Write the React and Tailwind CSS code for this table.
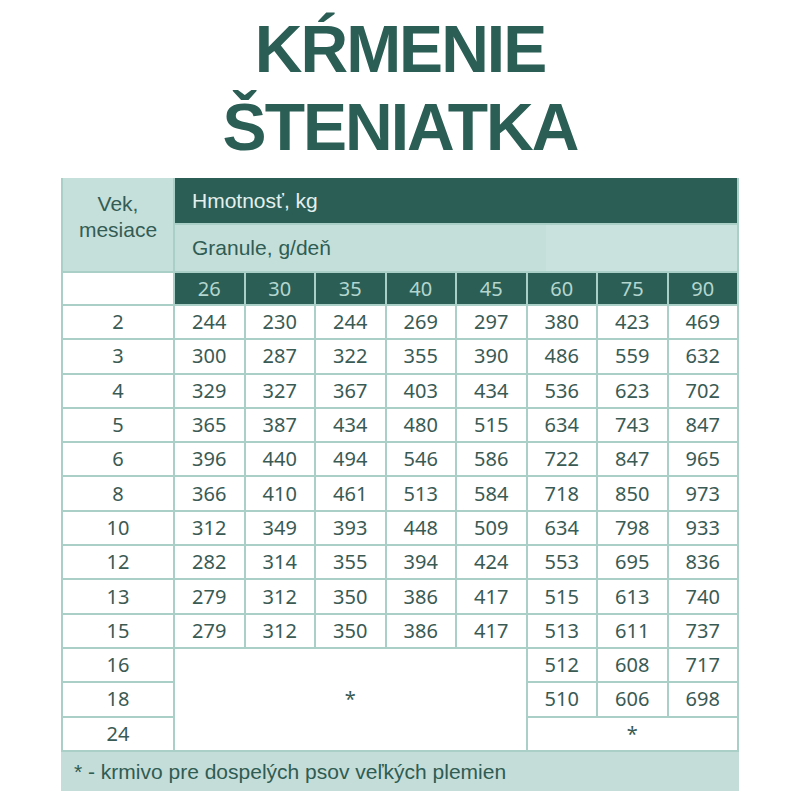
import React from "react";

const weights = [26, 30, 35, 40, 45, 60, 75, 90];

const rows = [
  ["2", [244, 230, 244, 269, 297, 380, 423, 469]],
  ["3", [300, 287, 322, 355, 390, 486, 559, 632]],
  ["4", [329, 327, 367, 403, 434, 536, 623, 702]],
  ["5", [365, 387, 434, 480, 515, 634, 743, 847]],
  ["6", [396, 440, 494, 546, 586, 722, 847, 965]],
  ["8", [366, 410, 461, 513, 584, 718, 850, 973]],
  ["10", [312, 349, 393, 448, 509, 634, 798, 933]],
  ["12", [282, 314, 355, 394, 424, 553, 695, 836]],
  ["13", [279, 312, 350, 386, 417, 515, 613, 740]],
  ["15", [279, 312, 350, 386, 417, 513, 611, 737]],
];

// last rows: only the big breeds still on puppy food
const tail = [
  ["16", [512, 608, 717]],
  ["18", [510, 606, 698]],
];

const cell =
  "bg-white flex items-center justify-center text-[20px] text-[#3a5a54] font-['Noto_Sans',sans-serif]";
const arial = "font-['Liberation_Sans',Arial,sans-serif]";

const App = () => {
  return (
    <div className="w-[800px] h-[800px] bg-white overflow-hidden">
      <h1
        className={`pt-[10px] text-center text-[66px] leading-[78px] font-bold tracking-[-2px] text-[#2b5e55] ${arial}`}
      >
        KŔMENIE
        <br />
        ŠTENIATKA
      </h1>

      <div className="ml-[61px] mt-[12px] w-[678px]">
        <div className="grid grid-cols-[110px_repeat(8,minmax(0,1fr))] grid-rows-[45px_46px_31px_repeat(13,32.3px)] gap-[2px] px-[2px] pb-[2px] bg-[#a9cfc7]">
          <div
            className={`row-span-2 bg-[#c5e0da] pt-[13px] text-center text-[21px] leading-[26px] text-[#345c54] ${arial}`}
          >
            Vek,
            <br />
            mesiace
          </div>
          <div
            className={`col-span-8 bg-[#2b5e55] flex items-center pl-[17px] text-[21px] text-[#e3f0ed] ${arial}`}
          >
            Hmotnosť, kg
          </div>
          <div
            className={`col-span-8 bg-[linear-gradient(90deg,#c4dfd9_66%,#cae2dd_66%)] flex items-center pl-[17px] text-[21px] text-[#2f5c53] ${arial}`}
          >
            Granule, g/deň
          </div>

          <div className="bg-white" />
          {weights.map((w) => (
            <div
              key={w}
              className="bg-[#2b5e55] flex items-center justify-center text-[20px] text-[#b3d6ce] font-['Noto_Sans',sans-serif]"
            >
              {w}
            </div>
          ))}

          {rows.map(([age, vals]) => (
            <React.Fragment key={age}>
              <div className={cell}>{age}</div>
              {vals.map((v, i) => (
                <div key={i} className={cell}>{v}</div>
              ))}
            </React.Fragment>
          ))}

          <div className={cell}>16</div>
          <div className={`${cell} col-span-5 row-span-3`}>*</div>
          {tail[0][1].map((v, i) => (
            <div key={i} className={cell}>{v}</div>
          ))}
          <div className={cell}>18</div>
          {tail[1][1].map((v, i) => (
            <div key={i} className={cell}>{v}</div>
          ))}
          <div className={cell}>24</div>
          <div className={`${cell} col-span-3`}>*</div>
        </div>

        <div
          className={`h-[39px] bg-[#c5ddd8] flex items-center pl-[13px] text-[21px] text-[#2f5c53] ${arial}`}
        >
          * - krmivo pre dospelých psov veľkých plemien
        </div>
      </div>
    </div>
  );
};

export default App;
